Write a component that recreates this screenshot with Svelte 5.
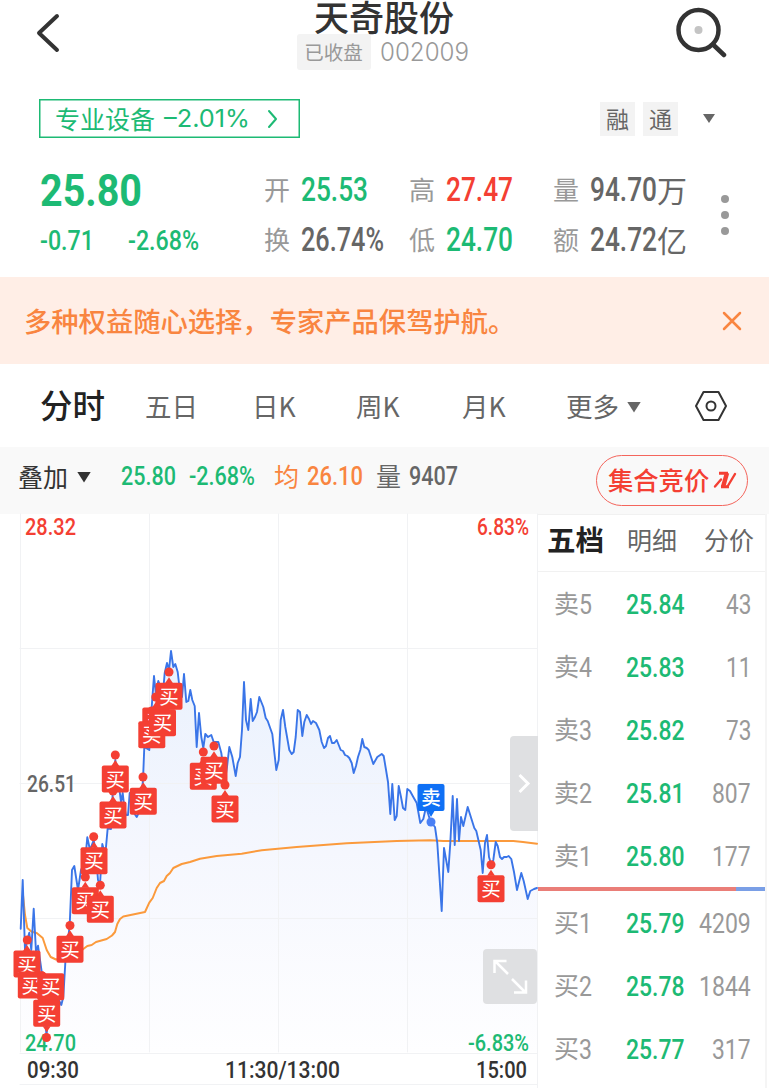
<script>
	let tabs = ['五日', '日K', '周K', '月K'];
	let activeTab = '分时';

	let quotes = [
		{ label: '开', value: '25.53', width: 67, color: 'green' },
		{ label: '高', value: '27.47', width: 67, color: 'red' },
		{ label: '量', value: '94.70', width: 67, color: 'dark', unit: '万' },
		{ label: '换', value: '26.74%', width: 83, color: 'dark' },
		{ label: '低', value: '24.70', width: 67, color: 'green' },
		{ label: '额', value: '24.72', width: 67, color: 'dark', unit: '亿' }
	];

	let sells = [
		{ name: '卖', level: '5', price: '25.84', amount: '43' },
		{ name: '卖', level: '4', price: '25.83', amount: '11' },
		{ name: '卖', level: '3', price: '25.82', amount: '73' },
		{ name: '卖', level: '2', price: '25.81', amount: '807' },
		{ name: '卖', level: '1', price: '25.80', amount: '177' }
	];

	let buys = [
		{ name: '买', level: '1', price: '25.79', amount: '4209' },
		{ name: '买', level: '2', price: '25.78', amount: '1844' },
		{ name: '买', level: '3', price: '25.77', amount: '317' }
	];

	// x, y of the box centre, then x, y of the dot on the price line
	let trades = [
		[27, 964, 27.3, 940],
		[31.3, 985, 42, 976],
		[50.7, 986.7, 42, 976],
		[46.7, 1013.3, 46.5, 1037.5],
		[70, 949.3, 70, 925.5],
		[85.3, 900.7, 85.3, 877],
		[100.3, 909.3, 100.3, 885.3],
		[94, 860.7, 93.7, 836.7],
		[113, 815, 113, 791],
		[115.3, 779, 115.3, 755],
		[143.3, 801.3, 143, 777],
		[155.8, 721, 155.8, 697],
		[151.8, 734.7, 151.8, 711],
		[162.5, 722.7, 162.5, 699],
		[169, 696.3, 169, 672],
		[203.3, 776.3, 203.3, 752],
		[214, 770.3, 214, 746],
		[225, 809, 225, 785],
		[491, 888.7, 491, 864.7]
	];

	let price = '20.7,928.7 22.7,880 25,950 27.3,940 29.3,932.7 31.3,950 33.7,908.7 36,952 38,945.7 41.7,972 46.5,1036 51,985 61.3,1005 63.3,997 65.3,963 69.7,925 72,870 74.3,866 78,890 81,870 85,862 87.3,837.3 90,850 93.7,840 96,855 98,880 100,885 102.3,844 104.5,852 106,847 107.7,828 111,829 112.7,793 115.3,760 118.3,780 121,802 122.7,793 124.3,807 126,815 128,815 129.7,793 133.3,812 136.7,817 140,810 143,780 144.3,747 149.3,750 151.7,707 154,676 155.7,692 158.3,681 160.7,687 163.5,687 164.7,673 167,663 169,670 171,651 173.3,667 175.3,664 177.7,672 180,692 182,697 184,674 186.3,702 188.3,701 190.3,690 192.3,700 194.7,706 196.7,747 199,713 201.3,737 203.3,748 205.3,734 208,737 211.3,735 213.7,742 218.3,742 221.3,753 225,780 227,767 229.3,747 232.3,757 235.7,776 237.7,763 240,757 242,730 244,682 246,720 248.3,730 250.7,699 252.7,721 255,717 257,712 259.3,697 263.3,707 265.7,718 267.7,721 272.3,734 276.3,770 278.7,760 280.7,720 283,710 285.3,727 289.3,750 291.7,754 293.7,752 295.7,737 297.7,710 300,712 302.3,736 304.3,722 306.7,715 309,719 311,724 313,721 316,723 319.3,730 321.7,742 324,748 326,746 328,738 330,736 332,743 334.3,743 336.7,740 338.7,745 340.7,750 343,751 345,755 347.3,756 349.3,758 351.7,763 353.7,773 356,766 358,757 360.3,750 362.3,739 364.3,747 366.7,748 368.7,750 373.3,764 377.3,757 381.7,754 383.7,756 385.7,768 388,782 390.3,814 392.3,784 394.7,820 396.7,816 398.7,786 401,797 403,808 405.3,810 407.3,789 410,791 413.3,797 416.7,803 420.3,823 423.3,819 426,807 430.7,822 435,827 437.3,843 441.7,911 444,848 448.3,872 450.3,843 452.7,796 454.7,845 457,799 459,841 461,817 463.3,826 467.7,807 474.3,828 476.3,831 480.7,850 482.7,873 485,843 487,835 489,857 491.3,865 493.3,860 495.7,842 497.7,846 500,857 502,859 504,857 506.7,857 508.7,856 511.3,859 514,872 517,890 521.3,873 523.7,881 527.7,899 530.3,891 534,889 537,888';
	let average = '23,895 25,915 27.3,928 31.7,931.7 36.7,933 42.7,938 46.7,950 50.7,957 56,959.5 70,956 83.3,949 87.3,946 91.7,945 96,942 106.7,939 112,935.5 115,932 117.3,924 120,919 123.3,916.5 145,912 149.3,902.7 152.7,898 156.7,888 160,883 164,881 166.7,876 170,873 173.3,868 181.7,864 190,862 200,858.7 216.7,856 241.7,853.7 261.7,850.3 296.7,847 346.7,843.3 396.7,841 430,840.3 443.3,841 513.3,841 523,842 537,843.7';

	const digitWidth = 13.2;
</script>

{#snippet num(text, width, kind)}
	<svg class="num {kind}" {width}>
		<text y="100%" textLength={width} lengthAdjust="spacingAndGlyphs">{text}</text>
	</svg>
{/snippet}

{#snippet level(row)}
	<div class="level">
		<div class="name"><span>{row.name}</span>{@render num(row.level, 13, 'book')}</div>
		{@render num(row.price, 58.5, 'book strong green')}
		<div class="amount">{@render num(row.amount, row.amount.length * digitWidth - 1, 'book')}</div>
	</div>
{/snippet}

<div class="page">
	<header>
		<svg class="back" width="24" height="40" viewBox="0 0 24 40"><path d="M21 3L3 20l18 17" /></svg>
		<div class="title">
			<h1>天奇股份</h1>
			<div class="sub">
				<span class="closed">已收盘</span>
				{@render num('002009', 89, 'code')}
			</div>
		</div>
		<svg class="search" width="52" height="52" viewBox="0 0 52 52">
			<circle cx="23.500" cy="24" r="20" />
			<path d="M38 38.500l11 10.500" />
			<circle class="core" cx="23.500" cy="24" r="4" />
		</svg>
	</header>

	<div class="industry">
		<div class="sector">
			<span>专业设备</span>
			{@render num('–2.01%', 86, 'rate')}
			<svg width="12" height="20" viewBox="0 0 12 20"><path d="M2 2l7 8-7 8" /></svg>
		</div>
		<div class="chips">
			<span>融</span>
			<span>通</span>
			<i class="triangle"></i>
		</div>
	</div>

	<section class="summary">
		<div class="last">
			<div class="price">{@render num('25.80', 102, 'huge green')}</div>
			<div class="change">
				{@render num('-0.71', 54, 'small green')}
				{@render num('-2.68%', 71, 'small green')}
			</div>
		</div>
		<div class="quotes">
			{#each quotes as quote}
				<div class="quote">
					<span class="label">{quote.label}</span>
					{@render num(quote.value, quote.width, 'big ' + quote.color)}
					{#if quote.unit}
						<span class="unit">{quote.unit}</span>
					{/if}
				</div>
			{/each}
		</div>
		<div class="dots"><i></i><i></i><i></i></div>
	</section>

	<div class="banner">
		<span>多种权益随心选择，专家产品保驾护航。</span>
		<svg width="20" height="20" viewBox="0 0 20 20"><path d="M2 2l16 16M18 2L2 18" /></svg>
	</div>

	<nav>
		<span class="tab active">{activeTab}</span>
		{#each tabs as tab}
			<span class="tab">{tab}</span>
		{/each}
		<span class="tab more">更多<i class="triangle"></i></span>
		<svg width="34" height="32" viewBox="0 0 34 32">
			<path d="M9.500 2h15L32 16l-7.500 14h-15L2 16z" />
			<circle cx="17" cy="16" r="4.500" />
		</svg>
	</nav>

	<div class="info">
		<span class="overlay">叠加</span>
		<i class="triangle black"></i>
		<div class="values">
			{@render num('25.80', 55, 'mid green')}
			{@render num('-2.68%', 66, 'mid green')}
			<span class="cn orange">均</span>
			{@render num('26.10', 56, 'mid orange')}
			<span class="cn dark">量</span>
			{@render num('9407', 49, 'mid dark')}
		</div>
		<div class="auction">
			<span>集合竞价</span>
			<svg width="24" height="18" viewBox="0 0 24 18">
				<path class="thin" d="M2 15.500L8 8.500M14.500 15.500L22 3" />
				<path class="thick" d="M6 2.200h9M8 15.800h8" />
				<path class="thick slant" d="M14 2L10 16" />
			</svg>
		</div>
	</div>

	<main>
		<svg class="chart" width="538" height="574" viewBox="0 514 538 574">
			<defs>
				<linearGradient id="area" x1="0" y1="0" x2="0" y2="1">
					<stop offset="0" stop-color="#e9f1fd" />
					<stop offset="0.500" stop-color="#f5f7fe" />
					<stop offset="1" stop-color="#fefeff" />
				</linearGradient>
			</defs>
			<polygon points="{price} 537,1052 20.700,1052" fill="url(#area)" />
			<path class="grid" d="M20.500 514V1052M149.500 514V1052M278.500 514V1052M407.500 514V1052M537.500 514V1088M20 648.500H537M20 783.500H537M20 918.500H537M20 1053.500H537M20 1084.500H537" />
			<polyline class="average" points={average} />
			<polyline class="line" points={price} />

			<g class="axis">
				<text class="red" x="25" y="534.500" textLength="51" lengthAdjust="spacingAndGlyphs">28.32</text>
				<text class="red" x="477" y="534.500" textLength="52" lengthAdjust="spacingAndGlyphs">6.83%</text>
				<text class="dark" x="27" y="792" textLength="49" lengthAdjust="spacingAndGlyphs">26.51</text>
				<text class="green" x="25" y="1051" textLength="51" lengthAdjust="spacingAndGlyphs">24.70</text>
				<text class="green" x="468" y="1051" textLength="61" lengthAdjust="spacingAndGlyphs">-6.83%</text>
				<text class="black" x="27" y="1078" textLength="52" lengthAdjust="spacingAndGlyphs">09:30</text>
				<text class="black" x="225" y="1078" textLength="115" lengthAdjust="spacingAndGlyphs">11:30/13:00</text>
				<text class="black" x="476" y="1078" textLength="51" lengthAdjust="spacingAndGlyphs">15:00</text>
			</g>

			{#each trades as [x, y, dotX, dotY]}
				<g class="buy">
					<circle cx={dotX} cy={dotY} r="4.500" />
					{#if y - dotY > 20}
						<path d="M{x - 4} {y - 13}l4-6 4 6z" />
					{:else if dotY > y}
						<path d="M{x - 4} {y + 13}l4 6 4-6z" />
					{/if}
					<rect x={x - 13.5} y={y - 13.5} width="27" height="27" rx="2" />
					<text {x} y={y + 7.5}>买</text>
				</g>
			{/each}
			<g class="sell">
				<circle cx="431" cy="822" r="4.500" />
				<path d="M427 810l4 7 4-7z" />
				<rect x="417.500" y="784" width="27" height="27" rx="2" />
				<text x="431" y="804.500">卖</text>
			</g>

			<path class="handle" d="M538 736h-24q-4 0-4 4v87q0 4 4 4h24z" />
			<path class="white" d="M519.500 775l8.500 8.500-8.500 8.500" />
			<rect class="handle" x="483" y="949" width="54" height="55" rx="4" />
			<path class="white expand" d="M508 974l-13-13M494.500 973v-12h12M512 979l13 13M514 992.500h12v-12" />
		</svg>

		<aside>
			<div class="book-tabs">
				<b>五档</b>
				<span>明细</span>
				<span>分价</span>
			</div>
			<div class="levels">
				{#each sells as row}
					{@render level(row)}
				{/each}
			</div>
			<div class="ratio"><i></i></div>
			<div class="levels buys">
				{#each buys as row}
					{@render level(row)}
				{/each}
			</div>
		</aside>
	</main>
</div>

<style>
	:global(body) {
		background: #fff;
	}

	.page {
		width: 769px;
		height: 1088px;
		overflow: hidden;
		background: #fff;
		font-family: 'Noto Sans CJK SC', sans-serif;
		color: #333;
	}

	.page * {
		box-sizing: border-box;
	}

	svg {
		display: block;
		flex: none;
		fill: none;
		stroke-linecap: round;
		stroke-linejoin: round;
	}

	/* numbers: the svg box is exactly as tall as a digit */
	.num {
		height: 0.711em;
		overflow: visible;
		fill: #999;
		font-family: Roboto, sans-serif;
		font-weight: 500;
	}

	.huge { font-size: 43.5px; font-weight: 700; }
	.big { font-size: 33px; }
	.small { font-size: 28px; }
	.mid { font-size: 26px; }
	.book { font-size: 28px; font-weight: 400; }
	.strong { font-weight: 500; }
	.code { font-size: 25px; font-family: Inter, sans-serif; font-weight: 300; }
	.rate { font-size: 24px; font-family: Inter, sans-serif; font-weight: 400; fill: #1dba74; }

	.green { fill: #1dba74; }
	.red { fill: #f43f33; }
	.dark { fill: #666; color: #666; }
	.orange { fill: #f98540; color: #f98540; }
	.black { fill: #333; }

	.triangle {
		width: 14px;
		height: 11px;
		background: #666;
		clip-path: polygon(0 0, 100% 0, 50% 100%);
	}

	header {
		display: flex;
		justify-content: space-between;
		height: 90px;
		padding: 0 42px 0 36px;
	}

	.back {
		margin-top: 13px;
		stroke: #333;
		stroke-width: 4;
	}

	.title {
		display: flex;
		flex-direction: column;
		align-items: center;
		width: 172px;
		margin-left: 30px;
	}

	h1 {
		margin: 0;
		height: 34px;
		padding-left: 3px;
		font-size: 35px;
		line-height: 31px;
		font-weight: 500;
		white-space: nowrap;
	}

	.sub {
		display: flex;
		align-items: center;
		gap: 9px;
	}

	.closed {
		width: 74px;
		height: 36px;
		border-radius: 3px;
		background: #f3f3f3;
		color: #999;
		font-size: 19.5px;
		line-height: 35px;
		text-align: center;
	}

	.search {
		margin-top: 6px;
		stroke: #333;
		stroke-width: 4.5;
	}

	.search .core {
		fill: #c4c4c4;
		stroke: none;
	}

	.industry {
		display: flex;
		justify-content: space-between;
		align-items: center;
		height: 58px;
		padding: 0 53px 1px 39px;
	}

	.sector {
		display: flex;
		align-items: center;
		width: 261px;
		height: 39px;
		padding: 0 0 0 15px;
		border: 1px solid #1dba74;
		box-shadow: inset 0 0 0 0.5px #1dba74;
		color: #1dba74;
		font-size: 25px;
	}

	.sector span {
		padding-bottom: 1px;
		line-height: 34px;
	}

	.sector .rate {
		margin: 0 17px 0 9px;
	}

	.sector path {
		stroke: #1dba74;
		stroke-width: 2;
	}

	.chips {
		display: flex;
		align-items: center;
		gap: 8px;
	}

	.chips span {
		width: 35px;
		height: 34px;
		background: #f3f3f3;
		color: #666;
		font-size: 23px;
		line-height: 32px;
		text-align: center;
	}

	.chips .triangle {
		width: 12px;
		height: 9px;
		margin: 0 1px 0 17px;
	}

	.summary {
		display: flex;
		height: 129px;
		padding: 18px 0 0 40px;
	}

	.last {
		width: 224px;
	}

	.price {
		display: flex;
		align-items: center;
		height: 49px;
	}

	.change {
		display: flex;
		align-items: center;
		gap: 34px;
		height: 50px;
	}

	.quotes {
		display: grid;
		grid-template-columns: 145px 144px 145px;
		grid-template-rows: 50px 50px;
		margin-top: -1px;
	}

	.quote {
		display: flex;
		align-items: center;
		font-size: 26px;
	}

	.label {
		width: 37px;
		padding-bottom: 3px;
		color: #999;
	}

	.unit {
		padding-bottom: 3px;
		color: #666;
		font-size: 30px;
	}

	.dots {
		display: flex;
		flex-direction: column;
		gap: 8px;
		margin: 29px 0 0 23px;
	}

	.dots i {
		width: 8px;
		height: 8px;
		border-radius: 50%;
		background: #999;
	}

	.banner {
		display: flex;
		justify-content: space-between;
		align-items: center;
		height: 87px;
		padding: 0 27px 0 24px;
		background: #ffeee6;
		color: #f98540;
		font-size: 27.3px;
		font-weight: 500;
	}

	.banner span {
		padding-bottom: 2px;
	}

	.banner path {
		stroke: #f98540;
		stroke-width: 2.5;
	}

	nav {
		display: grid;
		grid-template-columns: 105px 107px 104px 106px 104px 128px 34px;
		align-items: center;
		height: 83px;
		padding-left: 40px;
	}

	.tab {
		padding-bottom: 1px;
		color: #666;
		font-size: 26.5px;
	}

	.tab.active {
		padding-bottom: 4px;
		color: #222;
		font-size: 32.5px;
		font-weight: 500;
	}

	.more {
		display: flex;
		align-items: center;
		gap: 8px;
	}

	.more .triangle {
		margin-top: 4px;
	}

	nav svg {
		stroke: #333;
		stroke-width: 2;
	}

	.info {
		display: flex;
		align-items: center;
		height: 67px;
		padding: 0 21px 7px 18px;
		background: #f9f9f9;
	}

	.overlay {
		padding-bottom: 3px;
		font-size: 25px;
	}

	.triangle.black {
		margin: 0 0 0 9px;
		background: #333;
	}

	.values {
		display: flex;
		align-items: center;
		margin: -1px 0 0 30px;
	}

	.values .num + .num {
		margin-left: 13px;
	}

	.cn {
		width: 33px;
		margin-left: 13px;
		padding-bottom: 3px;
		font-size: 25px;
	}

	.cn.orange {
		margin-left: 19px;
	}

	.auction {
		display: flex;
		align-items: center;
		gap: 4px;
		width: 152px;
		height: 51px;
		margin: 7px 0 0 auto;
		padding: 0 0 1px 11px;
		border: 1px solid #f4655c;
		border-radius: 26px;
		color: #f43f33;
		font-size: 25.3px;
		font-weight: 500;
	}

	.auction span {
		padding-bottom: 3px;
	}

	.auction path {
		stroke: #f43f33;
		stroke-width: 2.4;
	}

	.auction .thick {
		stroke-width: 3;
		stroke-linecap: butt;
		stroke-linejoin: miter;
	}

	.auction .slant {
		stroke-width: 4.5;
	}

	main {
		display: flex;
		height: 574px;
	}

	.chart {
		overflow: visible;
	}

	.grid {
		stroke: #f1f2f4;
		stroke-width: 1;
	}

	.line {
		stroke: #3a75e8;
		stroke-width: 1.9;
	}

	.average {
		stroke: #fb9a3c;
		stroke-width: 2;
	}

	.axis {
		font-family: Roboto, sans-serif;
		font-size: 23px;
		font-weight: 500;
	}

	.buy,
	.sell {
		fill: #f43f33;
		font-size: 19.5px;
		text-anchor: middle;
	}

	.sell {
		fill: #0f70f5;
		font-weight: 500;
	}

	.sell circle {
		fill: #4a80f5;
	}

	.buy text,
	.sell text {
		fill: #fff;
	}

	.handle {
		fill: #dfe0e2;
	}

	.white {
		stroke: #fff;
		stroke-width: 3;
		stroke-linecap: butt;
		stroke-linejoin: miter;
	}

	.expand {
		stroke-width: 2.5;
	}

	aside {
		width: 229px;
		border-right: 2px solid #f5f5f5;
	}

	.book-tabs {
		display: flex;
		align-items: center;
		height: 58px;
		padding: 0 0 9px 9px;
		border-top: 1px solid #f1f1f1;
		border-bottom: 1px solid #f1f1f1;
		color: #666;
		font-size: 25px;
	}

	.book-tabs b {
		width: 80px;
		color: #222;
		font-size: 28.5px;
		font-weight: 700;
	}

	.book-tabs span {
		width: 77px;
		white-space: nowrap;
	}

	.book-tabs span:last-child {
		width: 50px;
	}

	.levels {
		display: flex;
		flex-direction: column;
		height: 315px;
	}

	.buys {
		height: 189px;
	}

	.level {
		display: flex;
		align-items: center;
		height: 63px;
		padding: 0 14px 0 16px;
		color: #999;
		font-size: 25px;
	}

	.name {
		display: flex;
		align-items: center;
		width: 72px;
	}

	.name span {
		padding-bottom: 3px;
	}

	.amount {
		margin-left: auto;
	}

	.ratio {
		height: 4px;
		background: #7a9fe6;
	}

	.ratio i {
		display: block;
		width: 198px;
		height: 4px;
		background: #ea7e78;
	}
</style>
